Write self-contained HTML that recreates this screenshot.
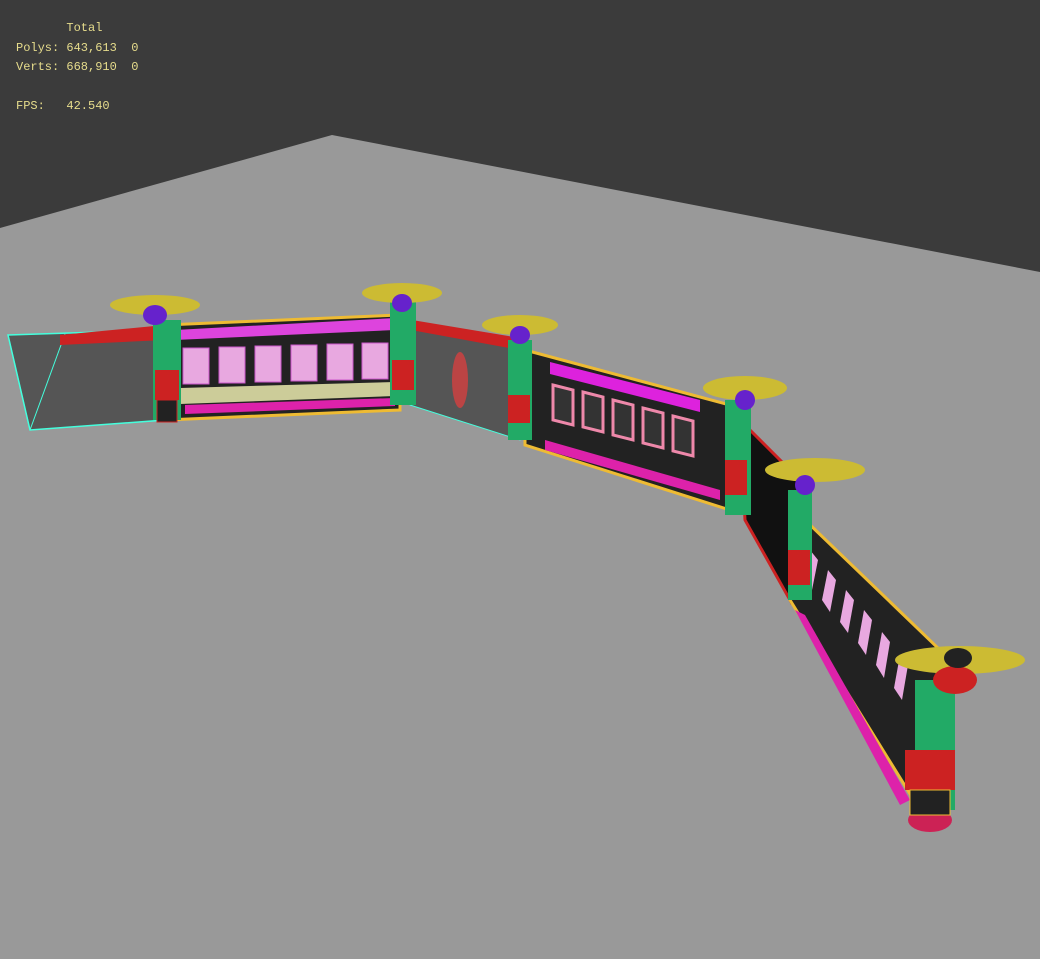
<!DOCTYPE html>
<html><head><style>
html,body{margin:0;padding:0;background:#3b3b3b;width:1040px;height:959px;overflow:hidden}
.t{position:absolute;font-family:"Liberation Mono",monospace;font-size:12px;color:#e6dc8c;white-space:pre;line-height:19.5px}
</style></head><body>
<svg width="1040" height="959" style="position:absolute;left:0;top:0">
<polygon points="0,228 332,135 1040,272 1040,959 0,959" fill="#999999"/>
<polygon points="8,335 165,330 165,420 30,430" fill="#555" stroke="#4fd" stroke-width="1.5"/>
<line x1="8" y1="335" x2="30" y2="430" stroke="#4fd"/><line x1="65" y1="334" x2="30" y2="430" stroke="#4fd"/>
<polygon points="60,335 165,325 165,340 60,345" fill="#c22"/>
<polygon points="165,325 400,315 400,410 165,420" fill="#222" stroke="#eb3" stroke-width="3"/>
<polygon points="175,330 395,318 395,330 175,340" fill="#d4d" />
<g fill="#e8a8e0" stroke="#c5c" >
<rect x="183" y="348" width="26" height="36"/><rect x="219" y="347" width="26" height="36"/><rect x="255" y="346" width="26" height="36"/><rect x="291" y="345" width="26" height="36"/><rect x="327" y="344" width="26" height="36"/><rect x="362" y="343" width="26" height="36"/>
</g>
<polygon points="180,388 395,382 395,396 180,404" fill="#cc9"/>
<polygon points="185,405 395,398 395,406 185,414" fill="#d2a"/>
<polygon points="400,320 520,340 520,440 410,405" fill="#555" stroke="#4fd"/>
<polygon points="400,318 520,338 520,350 400,328" fill="#c22"/>
<ellipse cx="460" cy="380" rx="8" ry="28" fill="#b44"/>
<polygon points="525,350 730,405 730,510 525,445" fill="#222" stroke="#eb3" stroke-width="3"/>
<polygon points="550,362 700,400 700,412 550,374" fill="#d2d"/>
<g fill="#333" stroke="#e8a" stroke-width="3">
<polygon points="553,385 573,390 573,425 553,420"/><polygon points="583,392 603,397 603,432 583,427"/><polygon points="613,400 633,405 633,440 613,435"/><polygon points="643,408 663,413 663,448 643,443"/><polygon points="673,416 693,421 693,456 673,451"/>
</g>
<polygon points="545,440 720,490 720,500 545,450" fill="#d2a"/>
<polygon points="740,420 800,480 790,600 745,520" fill="#111" stroke="#c22" stroke-width="3"/>
<polygon points="805,520 940,650 920,810 790,600" fill="#222" stroke="#eb3" stroke-width="3"/>
<g fill="#e8a8e0">
<polygon points="810,550 818,560 812,590 805,580"/><polygon points="828,570 836,580 830,612 822,600"/><polygon points="846,590 854,600 848,633 840,622"/><polygon points="864,610 872,620 866,655 858,643"/><polygon points="882,632 890,642 884,678 876,665"/><polygon points="900,655 908,665 902,700 894,688"/>
</g>
<polygon points="795,610 805,615 910,800 900,805" fill="#d2a"/>
<g>
<rect x="153" y="320" width="28" height="100" fill="#2a6"/><rect x="155" y="370" width="24" height="30" fill="#c22"/><rect x="157" y="400" width="20" height="22" fill="#222" stroke="#c22"/>
<ellipse cx="155" cy="305" rx="45" ry="10" fill="#cb3"/><ellipse cx="155" cy="315" rx="12" ry="10" fill="#62c"/>
<rect x="390" y="300" width="26" height="105" fill="#2a6"/><rect x="392" y="360" width="22" height="30" fill="#c22"/>
<ellipse cx="402" cy="293" rx="40" ry="10" fill="#cb3"/><ellipse cx="402" cy="303" rx="10" ry="9" fill="#62c"/>
<rect x="508" y="340" width="24" height="100" fill="#2a6"/><rect x="508" y="395" width="22" height="28" fill="#c22"/>
<ellipse cx="520" cy="325" rx="38" ry="10" fill="#cb3"/><ellipse cx="520" cy="335" rx="10" ry="9" fill="#62c"/>
<rect x="725" y="400" width="26" height="115" fill="#2a6"/><rect x="725" y="460" width="22" height="35" fill="#c22"/>
<ellipse cx="745" cy="388" rx="42" ry="12" fill="#cb3"/><ellipse cx="745" cy="400" rx="10" ry="10" fill="#62c"/>
<rect x="788" y="490" width="24" height="110" fill="#2a6"/><rect x="788" y="550" width="22" height="35" fill="#c22"/>
<ellipse cx="815" cy="470" rx="50" ry="12" fill="#cb3"/><ellipse cx="805" cy="485" rx="10" ry="10" fill="#62c"/>
<rect x="915" y="680" width="40" height="130" fill="#2a6"/><rect x="905" y="750" width="50" height="40" fill="#c22"/>
<ellipse cx="930" cy="820" rx="22" ry="12" fill="#c25"/><rect x="910" y="790" width="40" height="25" fill="#222" stroke="#eb3"/>
<ellipse cx="960" cy="660" rx="65" ry="14" fill="#cb3"/><ellipse cx="955" cy="680" rx="22" ry="14" fill="#c22"/><ellipse cx="958" cy="658" rx="14" ry="10" fill="#222"/>
</g>
</svg>
<div class="t" style="left:16px;top:19px">       Total
Polys: 643,613  0
Verts: 668,910  0

FPS:   42.540</div>
</body></html>
